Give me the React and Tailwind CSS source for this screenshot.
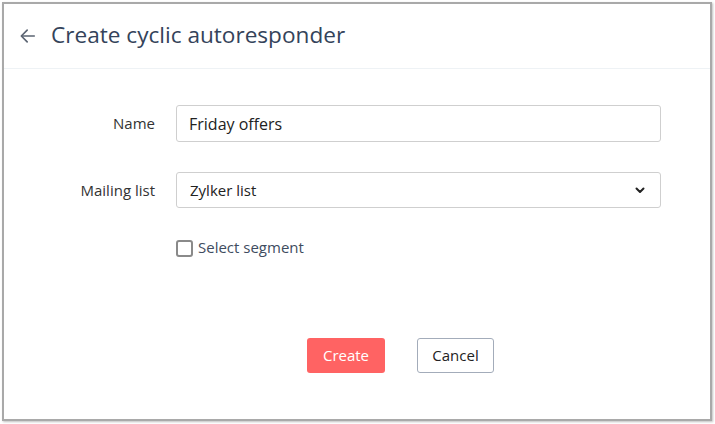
import React from "react";

export default function App() {
  return (
    <div className="w-[715px] h-[424px] bg-white pt-[2px] pl-[2px]" style={{ fontFamily: '"Open Sans", "Noto Sans", sans-serif' }}>
      <div className="w-[710px] h-[419px] border-2 border-[#a9a9a9] shadow-[1px_1px_2px_rgba(0,0,0,0.25)] bg-white flex flex-col">
        <div className="h-[65px] border-b border-[#eef2f5] flex items-center pl-[14px]">
          <svg width="20" height="20" viewBox="0 0 24 24" fill="none" stroke="#5b6472" strokeWidth="2" strokeLinecap="round" strokeLinejoin="round" className="mr-[13px] mt-[-1px]">
            <path d="M19.5 12H5" />
            <path d="M11 5l-7 7 7 7" />
          </svg>
          <h1 className="text-[22.6px] leading-none text-[#34435a] mt-[-2px]">Create cyclic autoresponder</h1>
        </div>
        <div className="flex flex-col pt-[36px]">
          <div className="flex items-center">
            <div className="w-[151px] text-right text-[15px] text-[#333]">Name</div>
            <div className="ml-[21px] w-[485px] h-[37px] border border-[#cfcfcf] rounded-[3px] flex items-center pl-[12px] text-[16px] text-[#222]">Friday offers</div>
          </div>
          <div className="flex items-center mt-[30px]">
            <div className="w-[151px] text-right text-[15px] text-[#333]">Mailing list</div>
            <div className="ml-[21px] w-[485px] h-[36px] border border-[#cfcfcf] rounded-[3px] flex items-center justify-between pl-[13px] pr-[14px] text-[15px] text-[#222]">
              <span>Zylker list</span>
              <svg width="12" height="12" viewBox="0 0 12 12" fill="none" stroke="#222" strokeWidth="2" strokeLinecap="round" strokeLinejoin="round">
                <path d="M2.5 4.5L6 8l3.5-3.5" />
              </svg>
            </div>
          </div>
          <div className="flex items-center mt-[30px] ml-[172px]">
            <div className="w-[17px] h-[17px] border-2 border-[#8a8a8a] rounded-[3px]" />
            <span className="ml-[5px] text-[15px] text-[#3e4c60] mt-[-2px]">Select segment</span>
          </div>
          <div className="flex mt-[79px] ml-[303px] gap-[32px]">
            <button className="w-[78px] h-[35px] bg-[#ff6363] rounded-[3px] text-white text-[15px]">Create</button>
            <button className="w-[77px] h-[35px] border border-[#a3acba] rounded-[3px] text-[#222] text-[15px] bg-white">Cancel</button>
          </div>
        </div>
      </div>
    </div>
  );
}
